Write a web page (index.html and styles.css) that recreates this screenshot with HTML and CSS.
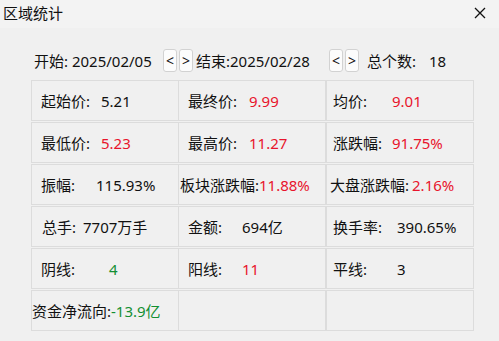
FILE: index.html
```html
<!DOCTYPE html>
<html lang="zh-CN">
<head>
    <meta charset="UTF-8">
    <title>区域统计</title>
    <link rel="stylesheet" href="styles.css">
</head>
<body>
    <div class="window">
        <!-- Title bar -->
        <div class="titlebar">
            <span class="title">区域统计</span>
            <span class="close">
                <svg width="12" height="12" viewBox="0 0 12 12">
                    <path d="M1 1 L11 11 M11 1 L1 11" stroke="#111" stroke-width="1.3" fill="none"/>
                </svg>
            </span>
        </div>

        <div class="content">
            <!-- Date range -->
            <div class="toolbar">
                <span class="date start">开始: 2025/02/05</span>
                <button class="nav">&lt;</button>
                <button class="nav">&gt;</button>
                <span class="date end">结束:2025/02/28</span>
                <button class="nav">&lt;</button>
                <button class="nav">&gt;</button>
                <span class="count-label">总个数:</span>
                <span class="count">18</span>
            </div>

            <!-- Stats grid -->
            <div class="stats">
                <div class="cell"><span class="k w60">起始价:</span><span class="v">5.21</span></div>
                <div class="cell"><span class="k w61">最终价:</span><span class="v up">9.99</span></div>
                <div class="cell c3"><span class="k w59">均价:</span><span class="v up">9.01</span></div>

                <div class="cell"><span class="k w60">最低价:</span><span class="v up">5.23</span></div>
                <div class="cell"><span class="k w61">最高价:</span><span class="v up">11.27</span></div>
                <div class="cell c3"><span class="k w59">涨跌幅:</span><span class="v up">91.75%</span></div>

                <div class="cell"><span class="k w55">振幅:</span><span class="v">115.93%</span></div>
                <div class="cell wide"><span class="k">板块涨跌幅:</span><span class="v up">11.88%</span></div>
                <div class="cell c3 wide"><span class="k sp">大盘涨跌幅:</span><span class="v up">2.16%</span></div>

                <div class="cell"><span class="k w41 pl1">总手:</span><span class="v">7707万手</span></div>
                <div class="cell"><span class="k w54">金额:</span><span class="v">694亿</span></div>
                <div class="cell c3"><span class="k w64">换手率:</span><span class="v">390.65%</span></div>

                <div class="cell"><span class="k w68">阴线:</span><span class="v down">4</span></div>
                <div class="cell"><span class="k w54">阳线:</span><span class="v up">11</span></div>
                <div class="cell c3"><span class="k w64">平线:</span><span class="v">3</span></div>

                <div class="cell flow"><span class="k">资金净流向:</span><span class="v down">-13.9亿</span></div>
                <div class="cell"></div>
                <div class="cell"></div>
            </div>
        </div>
    </div>
</body>
</html>
```

FILE: styles.css
```css
/* General */
body {
    margin: 0;
    padding: 0;
    font-family: "Noto Sans", "Noto Sans CJK SC", sans-serif;
    font-size: 15px;
    color: #111;
    background: #f0f0f0;
}

.window {
    width: 499px;
    height: 341px;
    background: #f0f0f0;
    overflow: hidden;
}

/* Title bar */
.titlebar {
    height: 28px;
    display: flex;
    align-items: center;
    justify-content: space-between;
    background: #f3f3f3;
}

.title {
    padding-left: 3px;
    margin-top: -3px;
    font-size: 15px;
    line-height: 20px;
}

.close {
    display: flex;
    width: 12px;
    height: 12px;
    margin-right: 13px;
    margin-top: -3px;
}

/* Content */
.content {
    padding: 21px 0 0 31px;
}

.toolbar {
    display: flex;
    align-items: center;
    height: 23px;
    margin-bottom: 8px;
    line-height: 20px;
}

.date.start {
    width: 129px;
    padding-left: 3px;
}

.date.end {
    width: 133px;
    margin-left: 1px;
}

.nav {
    width: 14px;
    height: 23px;
    padding: 0;
    margin-right: 2px;
    border: 1px solid #d2d2d2;
    border-radius: 3px;
    background: #fcfcfc;
    font-family: "Noto Sans", sans-serif;
    font-size: 14px;
    line-height: 18px;
    color: #111;
}

.count-label {
    width: 62px;
    margin-left: 6px;
}

.count {
    color: #111;
}

/* Stats grid */
.stats {
    display: grid;
    grid-template-columns: 148px 147px 148px;
    grid-auto-rows: 41px;
    row-gap: 1px;
}

.cell {
    display: flex;
    align-items: center;
    padding-left: 9px;
    border: 1px solid #dcdcdc;
    line-height: 20px;
    white-space: nowrap;
}

.cell:nth-child(3n+2) {
    border-left-width: 0;
    padding-left: 9px;
}

.cell.c3 {
    padding-left: 6px;
}

.cell.wide {
    padding-left: 1px;
}

.cell.c3.wide {
    padding-left: 3px;
}

.cell.flow {
    padding-left: 0;
}

.k {
    display: inline-block;
}

.k.sp {
    margin-right: 3px;
}

.pl1 { margin-left: 1px; }
.w41 { width: 41px; }
.w54 { width: 54px; }
.w55 { width: 55px; }
.w59 { width: 59px; }
.w60 { width: 60px; }
.w61 { width: 61px; }
.w64 { width: 64px; }
.w68 { width: 68px; }

.v.up {
    color: #e8142c;
}

.v.down {
    color: #138f33;
}
```
